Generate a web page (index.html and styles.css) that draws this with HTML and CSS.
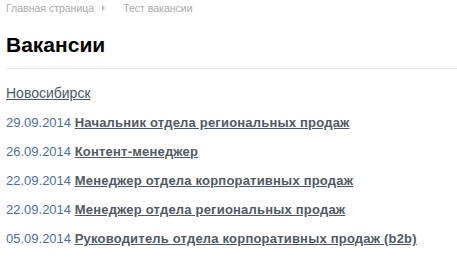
FILE: index.html
```html
<!DOCTYPE html>
<html lang="ru">
<head>
  <meta charset="UTF-8" />
  <title>Вакансии</title>
  <link rel="stylesheet" href="styles.css">
</head>
<body>
  <div class="page">
    <div class="crumbs">
      <a href="#">Главная страница</a>
      <span class="sep"></span>
      <span>Тест вакансии</span>
    </div>

    <h1>Вакансии</h1>

    <div class="city"><a href="#">Новосибирск</a></div>

    <ul class="jobs">
      <li><span class="date">29.09.2014</span> <a href="#">Начальник отдела региональных продаж</a></li>
      <li><span class="date">26.09.2014</span> <a href="#">Контент-менеджер</a></li>
      <li><span class="date">22.09.2014</span> <a href="#">Менеджер отдела корпоративных продаж</a></li>
      <li><span class="date">22.09.2014</span> <a href="#">Менеджер отдела региональных продаж</a></li>
      <li><span class="date">05.09.2014</span> <a href="#">Руководитель отдела корпоративных продаж (b2b)</a></li>
    </ul>
  </div>
</body>
</html>
```

FILE: styles.css
```css
body { margin: 0; font-family: "Liberation Sans", Arial, sans-serif; background: #fff; color: #333; }
.page { padding: 0 0 0 6px; }
.crumbs { font-size: 10.5px; color: #aaa; height: 16px; display: flex; align-items: center; }
.crumbs a { color: #aaa; text-decoration: none; }
.crumbs .sep { width: 0; height: 0; border-left: 3px solid #bbb; border-top: 3px solid transparent; border-bottom: 3px solid transparent; margin: 0 18px 0 8px; }
h1 { font-size: 21px; font-weight: bold; color: #000; margin: 0; padding: 17px 0 11px; border-bottom: 1px solid #e5e5e5; line-height: 24px; }
.city { font-size: 14px; line-height: 16px; margin-top: 16px; }
.city a { color: #4a5866; }
.jobs { list-style: none; margin: 14px 0 0; padding: 0; }
.jobs li { font-size: 13px; line-height: 15px; margin-bottom: 14px; }
.date { color: #4a6fa5; }
.jobs a { color: #4f5a64; font-weight: bold; letter-spacing: 0.2px; }
```
